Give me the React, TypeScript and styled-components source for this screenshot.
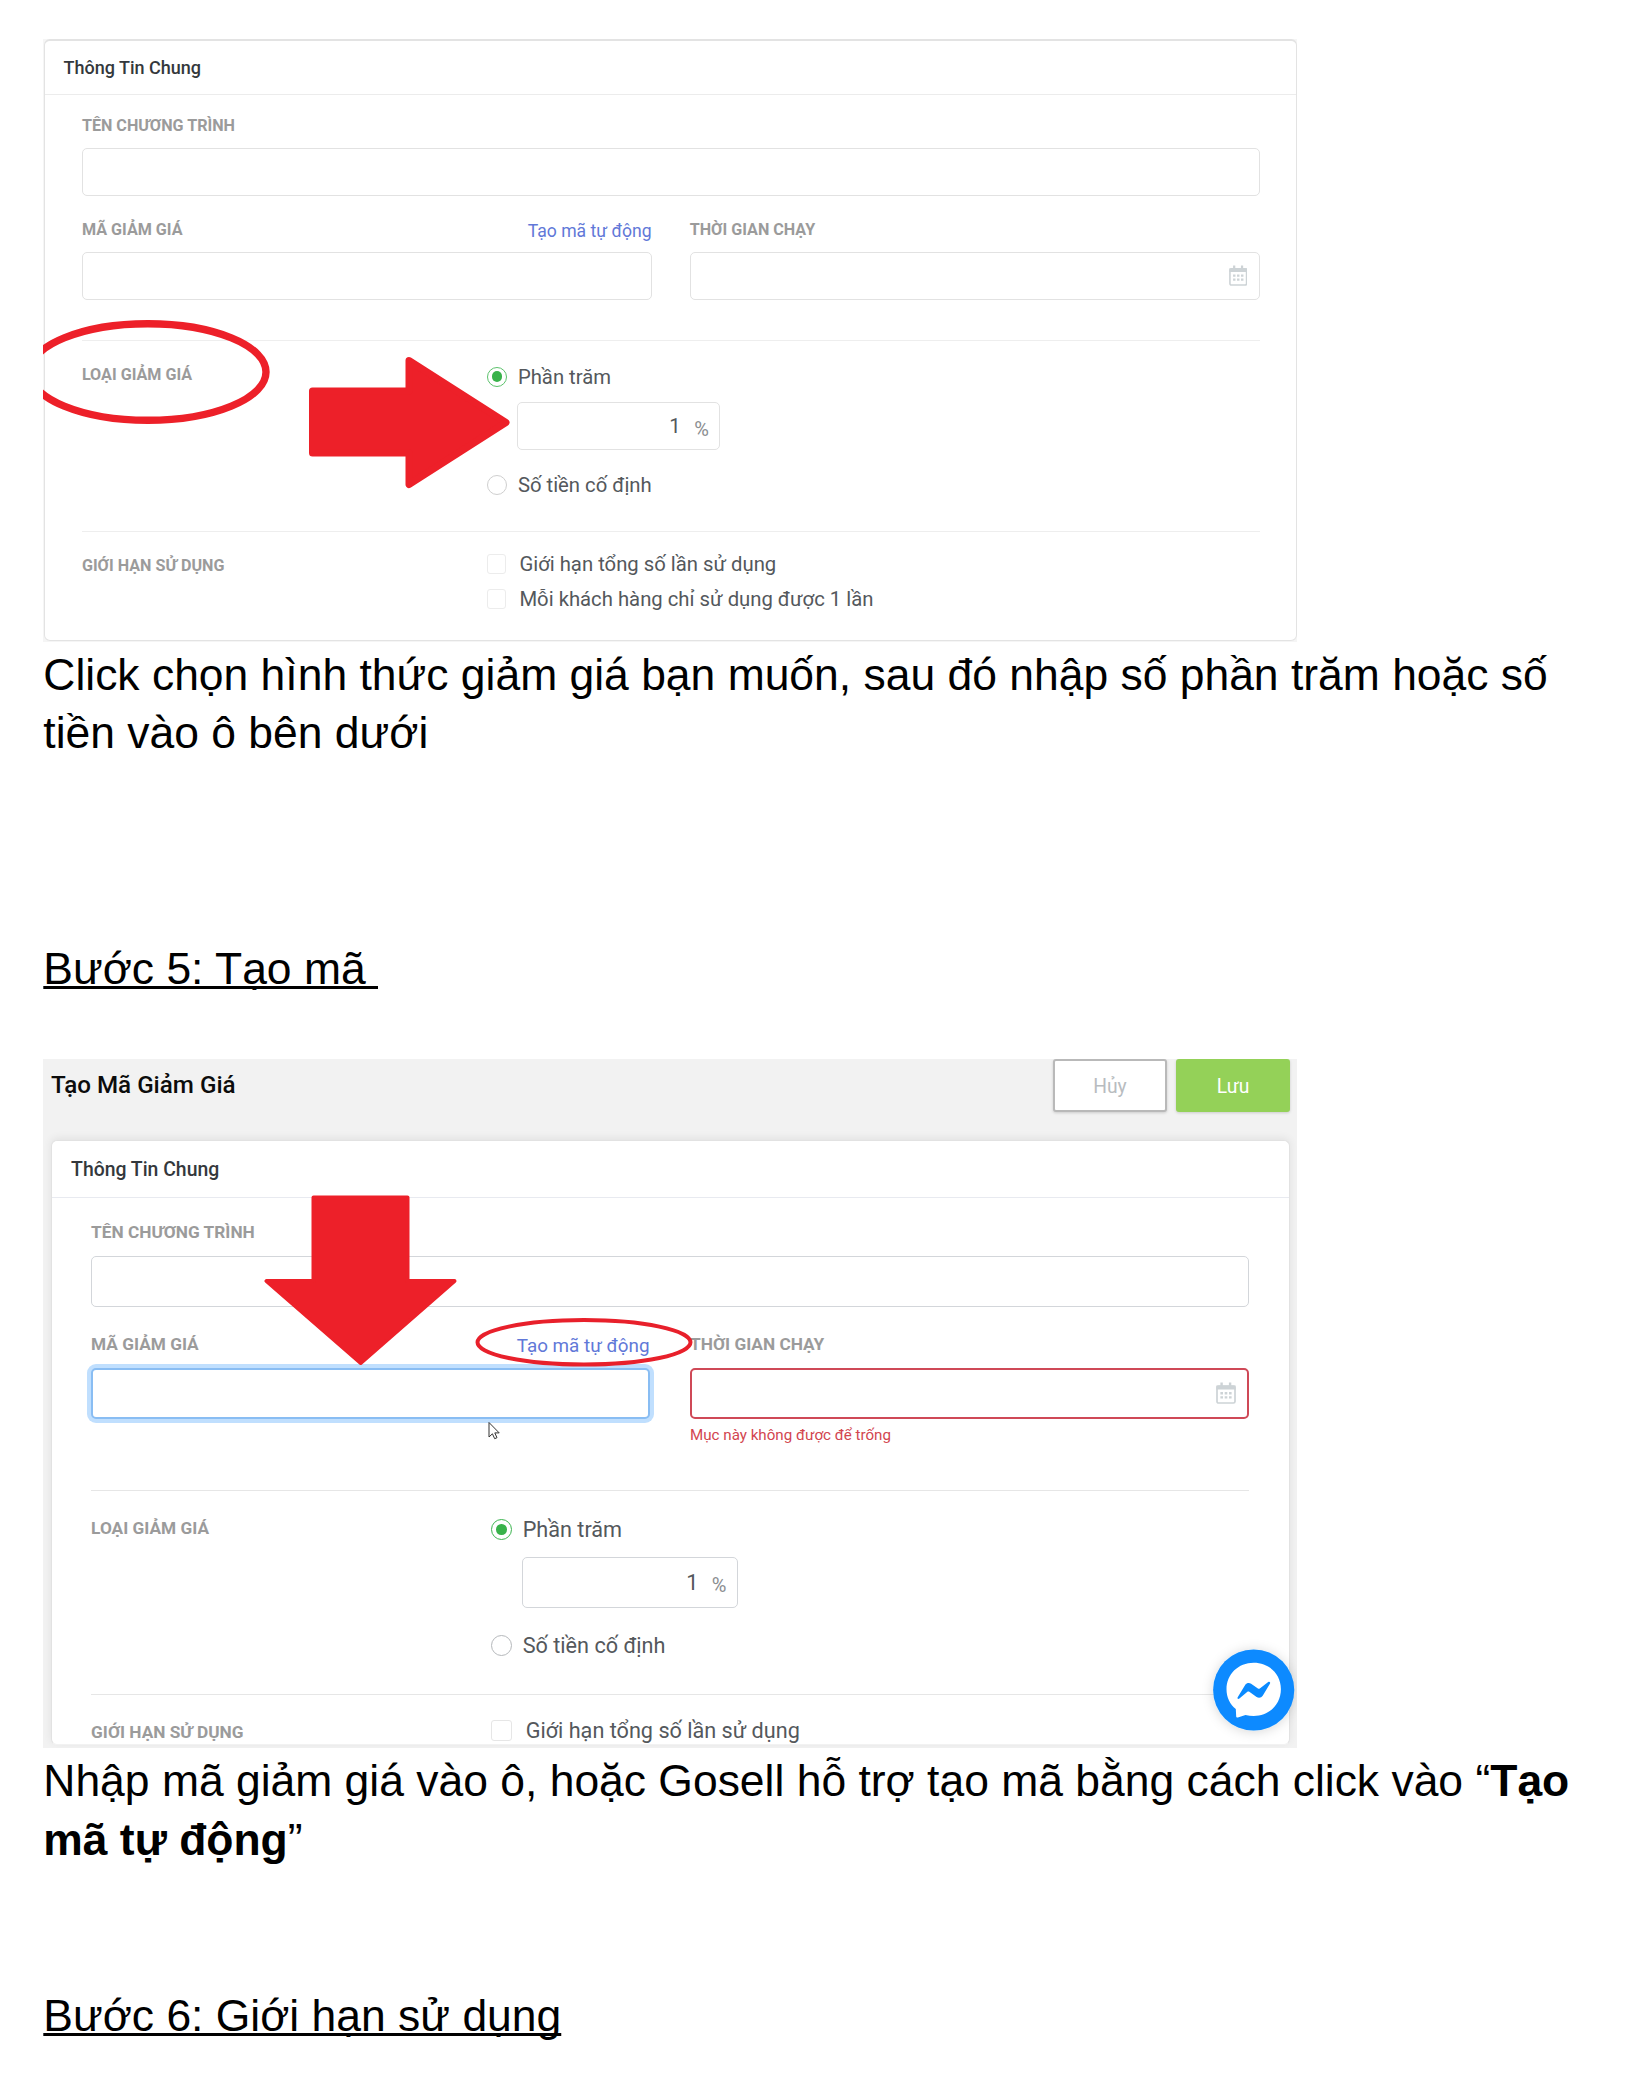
import styled, { createGlobalStyle, css, ThemeProvider } from "styled-components";

const GlobalStyle = createGlobalStyle`
  * { box-sizing: border-box; }
  body { margin: 0; background: #fff; }
`;

/* ---------- Sizes of the two form captures ---------- */

const compact = {
  padLeft: 37.4,
  padRight: 36.5,
  headPad: 19,
  headHeight: 54,
  headFont: 18,
  headLine: "#ececec",
  cardBorder: "#e3e3e3",
  fieldBorder: "#e2e2e2",
  rule: "#eeeeee",
  radioBorder: "#cfcfcf",
  radioGreen: "#5cc26c",
  checkBorder: "#ececec",
  labelFont: 16.15,
  linkFont: 17.6,
  textFont: 20.3,
  fieldHeight: 48,
  labelGap: 10,
  bodyTop: 18,
  rowGap: 21,
  columnGap: 38,
  ruleTop: 40,
  sectionTop: 21,
  optionsTop: 21,
  optionHeight: 29,
  optionColumn: 405,
  amountLeft: 30.5,
  amountWidth: 202.5,
  amountTop: 11,
  amountBottom: 20,
  radioSize: 20,
  radioGap: 11,
  checkGap: 13,
  checksTop: 17,
  checksGap: 6.5,
  rule2Top: 32,
  amountPad: 10,
};

const regular: typeof compact = {
  ...compact,
  padLeft: 39.6,
  padRight: 40,
  headPad: 19.6,
  headHeight: 57,
  headFont: 19.4,
  headLine: "#e8eaf0",
  cardBorder: "#e2e2e2",
  fieldBorder: "#d3d6da",
  rule: "#e6e6e6",
  radioBorder: "#b5b8bb",
  radioGreen: "#3cb44f",
  checkBorder: "#e6e6e6",
  labelFont: 17.25,
  linkFont: 18.85,
  textFont: 21.65,
  fieldHeight: 51,
  labelGap: 11,
  bodyTop: 22,
  rowGap: 25,
  columnGap: 40.5,
  ruleTop: 45,
  sectionTop: 25,
  optionsTop: 23,
  optionHeight: 31,
  optionColumn: 399.6,
  amountLeft: 31.8,
  amountWidth: 216,
  amountTop: 12,
  amountBottom: 22,
  radioSize: 21.5,
  radioGap: 10.5,
  checkGap: 14,
  checksTop: 20,
  rule2Top: 33,
  amountPad: 11,
};

/* ---------- Document ---------- */

const Page = styled.main`
  width: 1643px;
  height: 2085px;
  overflow: hidden;
  padding: 39px 0 0 42.5px;
  font-family: "Liberation Sans", Arial, sans-serif;
  color: #000;
`;

const Paragraph = styled.p<{ $top: number }>`
  margin: ${(p) => p.$top}px 0 0 0.8px;
  width: 1560px;
  font-size: 44.45px;
  line-height: 58.5px;
  white-space: pre-line;
`;

const StepTitle = styled.h2<{ $top: number }>`
  margin: ${(p) => p.$top}px 0 0 0.8px;
  font-size: 44.45px;
  font-weight: 400;
  line-height: 58.5px;
  white-space: pre;
  text-decoration: underline;
  text-decoration-thickness: 3px;
  text-underline-offset: 2px;
  text-decoration-skip-ink: none;
`;

/* ---------- Captures ---------- */

const Frame = styled.section<{ $gray?: boolean; $height: number; $top?: number }>`
  position: relative;
  overflow: hidden;
  width: 1254.5px;
  height: ${(p) => p.$height}px;
  margin-top: ${(p) => p.$top ?? 0}px;
  background: ${(p) => (p.$gray ? "#f2f2f2" : "#f5f5f5")};
  font-family: Roboto, sans-serif;
  color: #54585c;
`;

const Markup = styled.svg`
  position: absolute;
  inset: 0;
  width: 100%;
  height: 100%;
`;

const TopBar = styled.header`
  display: flex;
  align-items: flex-start;
  gap: 9px;
  height: 81px;
  padding: 0 7px 0 8.5px;
`;

const PageTitle = styled.h1`
  flex: 1;
  margin: 0;
  font-size: 24.2px;
  font-weight: 500;
  line-height: 53px;
  color: #0c0c0c;
`;

const Button = styled.button<{ $primary?: boolean }>`
  width: 114px;
  height: 53px;
  padding: 2px 0 0;
  border: ${(p) => (p.$primary ? "0" : "2px solid #b9b9b9")};
  border-radius: 3px;
  background: ${(p) => (p.$primary ? "#94d158" : "#fff")};
  color: ${(p) => (p.$primary ? "#fff" : "#b8bcc0")};
  font: 400 19.3px Roboto, sans-serif;
  box-shadow: 0 1px 3px rgba(0, 0, 0, 0.16);
`;

const Card = styled.div<{ $inset?: boolean }>`
  background: #fff;
  border: 1px solid ${(p) => p.theme.cardBorder};
  border-radius: 6px;
  ${(p) =>
    p.$inset
      ? css`
          height: 605px;
          overflow: hidden;
          margin: 0 7.5px 0 8px;
          border-bottom-color: #f2f2f2;
          box-shadow: 0 -2px 9px rgba(0, 0, 0, 0.07);
        `
      : css`
          height: 602px;
          margin-left: 1px;
          border-top-width: 2px;
        `}
`;

const CardHead = styled.div`
  display: flex;
  align-items: center;
  height: ${(p) => p.theme.headHeight}px;
  padding-left: ${(p) => p.theme.headPad}px;
  font-size: ${(p) => p.theme.headFont}px;
  font-weight: 500;
  color: #34383c;
  border-bottom: 1px solid ${(p) => p.theme.headLine};
`;

const CardBody = styled.div`
  padding: ${(p) => p.theme.bodyTop}px ${(p) => p.theme.padRight}px 0 ${(p) => p.theme.padLeft}px;
`;

const LabelRow = styled.div`
  display: flex;
  align-items: center;
  justify-content: space-between;
  height: 25px;
  margin-bottom: ${(p) => p.theme.labelGap}px;
`;

const Label = styled.span`
  font-size: ${(p) => p.theme.labelFont}px;
  font-weight: 700;
  line-height: 25px;
  color: #9b9b9b;
  white-space: nowrap;
`;

const AutoLink = styled.a`
  padding-top: 3px;
  font-size: ${(p) => p.theme.linkFont}px;
  line-height: 25px;
  color: #6178d8;
`;

const Field = styled.div<{ $state?: "focus" | "error" }>`
  display: flex;
  align-items: center;
  justify-content: flex-end;
  height: ${(p) => p.theme.fieldHeight}px;
  padding: 0 11.5px 1px 0;
  border: 1.5px solid ${(p) => p.theme.fieldBorder};
  border-radius: 5px;
  background: #fff;
  ${(p) =>
    p.$state === "focus" &&
    css`
      border: 2px solid #89bdf3;
      box-shadow: 0 0 0 4px #c0dffe;
    `}
  ${(p) =>
    p.$state === "error" &&
    css`
      border: 2px solid #cf4957;
      padding: 0 11px 2px 0;
    `}
`;

const FieldPair = styled.div`
  display: grid;
  grid-template-columns: 1fr 1fr;
  column-gap: ${(p) => p.theme.columnGap}px;
  margin-top: ${(p) => p.theme.rowGap}px;
`;

const ErrorText = styled.div`
  height: 20px;
  margin-top: 6px;
  font-size: 15.15px;
  line-height: 20px;
  color: #d2454f;
`;

const Rule = styled.hr<{ $top: number }>`
  height: 0;
  margin: ${(p) => p.$top}px 0 0;
  border: 0;
  border-top: 1.5px solid ${(p) => p.theme.rule};
`;

const Section = styled.div`
  display: grid;
  grid-template-columns: ${(p) => p.theme.optionColumn}px 1fr;
  align-items: start;

  > ${Label} {
    margin-top: ${(p) => p.theme.sectionTop}px;
  }
`;

const Options = styled.div<{ $top: number; $gap?: number }>`
  display: flex;
  flex-direction: column;
  gap: ${(p) => p.$gap ?? 0}px;
  padding-top: ${(p) => p.$top}px;
`;

const Option = styled.label<{ $gap: number }>`
  display: flex;
  align-items: center;
  gap: ${(p) => p.$gap}px;
  height: ${(p) => p.theme.optionHeight}px;
  font-size: ${(p) => p.theme.textFont}px;
  white-space: nowrap;
`;

const Radio = styled.span<{ $on?: boolean }>`
  display: grid;
  place-items: center;
  width: ${(p) => p.theme.radioSize}px;
  height: ${(p) => p.theme.radioSize}px;
  border: 1.5px solid ${(p) => (p.$on ? p.theme.radioGreen : p.theme.radioBorder)};
  border-radius: 50%;

  &::after {
    content: "";
    width: 10.5px;
    height: 10.5px;
    border-radius: 50%;
    background: ${(p) => (p.$on ? "#38b24a" : "transparent")};
  }
`;

const CheckBox = styled.span`
  width: ${(p) => p.theme.radioSize - 0.5}px;
  height: ${(p) => p.theme.radioSize}px;
  border: 1.5px solid ${(p) => p.theme.checkBorder};
  border-radius: 3px;
`;

const Amount = styled(Field)`
  gap: 13.5px;
  width: ${(p) => p.theme.amountWidth}px;
  margin: ${(p) => p.theme.amountTop}px 0 ${(p) => p.theme.amountBottom}px ${(p) => p.theme.amountLeft}px;
  padding: 0 ${(p) => p.theme.amountPad}px 0 0;
  font-size: ${(p) => p.theme.textFont}px;
`;

const Unit = styled.span`
  padding-top: 5px;
  font-size: 20px;
  color: #8b8e91;
`;

const ChatButton = styled.svg`
  position: absolute;
  right: 0;
  bottom: 0;
  width: 120px;
  height: 120px;
`;

const Calendar = ({ width, height }: { width: number; height: number }) => (
  <svg width={width} height={height} viewBox="0 0 20 22" preserveAspectRatio="none" fill="none">
    <rect x="1" y="4" width="18" height="17" rx="1.6" stroke="#cdd3d6" strokeWidth="1.7" />
    <path d="M.4 3.4h19.2v4H.4zM4.4.6h2.4v4H4.4zM12.9.6h2.4v4h-2.4z" fill="#cdd3d6" />
    <path
      d="M4.4 10h2.6v2.4H4.4zM8.7 10h2.6v2.4H8.7zM13 10h2.6v2.4H13zM4.4 14.2h2.6v2.4H4.4zM8.7 14.2h2.6v2.4H8.7zM13 14.2h2.6v2.4H13z"
      fill="#cdd3d6"
    />
  </svg>
);

const Messenger = () => (
  <ChatButton viewBox="0 0 120 120">
    <defs>
      <filter id="chatShadow" x="-30%" y="-30%" width="160%" height="160%">
        <feDropShadow dx="0" dy="1" stdDeviation="6" floodOpacity="0.16" />
      </filter>
    </defs>
    <circle cx="76.7" cy="62" r="40.6" fill="#0a8aff" filter="url(#chatShadow)" />
    <path
      d="M76.7 34.8c-15.4 0-27.2 11.4-27.2 26.4 0 8.2 3.6 15.2 9.3 19.9l.4 7.3c.1 1 .9 1.3 1.7 1l7.6-2.4c2.6.7 5.4 1 8.2 1 15.4 0 27.2-11.6 27.2-26.8S92.1 34.8 76.7 34.8z"
      fill="#fff"
    />
    <path
      d="M60.7 69.2l7.6-12.4c1.3-2 3.9-2.4 5.8-1.1l6.8 4.7c.6.4 1.3.4 1.9 0l8.4-6.3c1.3-1 2.6.4 1.7 1.7l-7.2 12c-1.3 2.1-4.2 2.5-6.1 1.1l-7.3-5.2c-.6-.4-1.3-.4-1.9 0l-8 6.8c-1.2 1-2.5-.1-1.7-1.3z"
      fill="#0a8aff"
    />
  </ChatButton>
);

const DiscountForm = ({ active, inset }: { active?: boolean; inset?: boolean }) => {
  const t = inset ? regular : compact;
  return (
    <ThemeProvider theme={t}>
      <Card $inset={inset}>
        <CardHead>Thông Tin Chung</CardHead>
        <CardBody>
          <LabelRow>
            <Label>TÊN CHƯƠNG TRÌNH</Label>
          </LabelRow>
          <Field />
          <FieldPair>
            <div>
              <LabelRow>
                <Label>MÃ GIẢM GIÁ</Label>
                <AutoLink>Tạo mã tự động</AutoLink>
              </LabelRow>
              <Field $state={active ? "focus" : undefined} />
            </div>
            <div>
              <LabelRow>
                <Label>THỜI GIAN CHẠY</Label>
              </LabelRow>
              <Field $state={active ? "error" : undefined}>
                <Calendar width={active ? 20 : 18.5} height={active ? 22 : 21} />
              </Field>
              {active && <ErrorText>Mục này không được để trống</ErrorText>}
            </div>
          </FieldPair>
          <Rule $top={t.ruleTop} />
          <Section>
            <Label>LOẠI GIẢM GIÁ</Label>
            <Options $top={t.optionsTop}>
              <Option $gap={t.radioGap}>
                <Radio $on />
                Phần trăm
              </Option>
              <Amount>
                <span>1</span>
                <Unit>%</Unit>
              </Amount>
              <Option $gap={t.radioGap}>
                <Radio />
                Số tiền cố định
              </Option>
            </Options>
          </Section>
          <Rule $top={t.rule2Top} />
          <Section>
            <Label>GIỚI HẠN SỬ DỤNG</Label>
            <Options $top={t.checksTop} $gap={t.checksGap}>
              <Option $gap={t.checkGap}>
                <CheckBox />
                Giới hạn tổng số lần sử dụng
              </Option>
              {!inset && (
                <Option $gap={t.checkGap}>
                  <CheckBox />
                  Mỗi khách hàng chỉ sử dụng được 1 lần
                </Option>
              )}
            </Options>
          </Section>
        </CardBody>
      </Card>
    </ThemeProvider>
  );
};

export default function App() {
  return (
    <>
      <GlobalStyle />
      <Page>
        <Frame $height={603}>
          <DiscountForm />
          <Markup viewBox="0 0 1254.5 603">
            <ellipse cx="104.8" cy="333" rx="118.2" ry="48.3" fill="none" stroke="#ed2029" strokeWidth="7.4" />
            <path
              d="M269.500 352H366V321.500L463 383.500L366 445.500V414H269.500z"
              fill="#ed2029"
              stroke="#ed2029"
              strokeWidth="7"
              strokeLinejoin="round"
            />
          </Markup>
        </Frame>
        <Paragraph $top={3.5}>
          {"Click chọn hình thức giảm giá bạn muốn, sau đó nhập số phần trăm hoặc số\ntiền vào ô bên dưới"}
        </Paragraph>

        <StepTitle $top={177}>{"Bước 5: Tạo mã "}</StepTitle>
        <Frame $gray $height={689} $top={61}>
          <TopBar>
            <PageTitle>Tạo Mã Giảm Giá</PageTitle>
            <Button>Hủy</Button>
            <Button $primary>Lưu</Button>
          </TopBar>
          <DiscountForm active inset />
          <Messenger />
          <Markup viewBox="0 0 1254.5 689">
            <path
              d="M270.500 138.500H364.500V222H411.500L317.700 304L223.500 222H270.500z"
              fill="#ed2029"
              stroke="#ed2029"
              strokeWidth="4"
              strokeLinejoin="round"
            />
            <ellipse cx="541" cy="283.300" rx="106.500" ry="22.200" fill="none" stroke="#e8202b" strokeWidth="4" />
            <path
              d="M446 363.500v14.500l3.400-3.200 2.300 4.900 2.300-1-2.200-4.800h4.400z"
              fill="#fff"
              stroke="#333"
              strokeWidth="1"
            />
          </Markup>
        </Frame>
        <Paragraph $top={4}>
          Nhập mã giảm giá vào ô, hoặc Gosell hỗ trợ tạo mã bằng cách click vào “<b>{"Tạo\nmã tự động"}</b>”
        </Paragraph>

        <StepTitle $top={118}>Bước 6: Giới hạn sử dụng</StepTitle>
      </Page>
    </>
  );
}
